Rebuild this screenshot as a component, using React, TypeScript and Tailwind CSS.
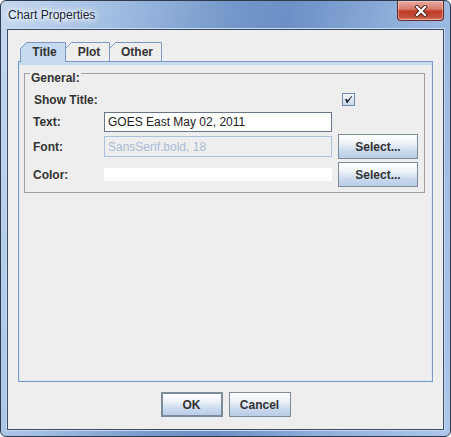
import React from "react";

const font = { fontFamily: '"Liberation Sans", Arial, sans-serif' };

function Tab({ label, width, selected, first }: { label: string; width: number; selected?: boolean; first?: boolean }) {
  const h = selected ? 20 : 19;
  return (
    <div
      className={`relative flex items-center justify-center text-[12px] font-bold text-[#333333] ${first ? "" : "-ml-px"} ${selected ? "z-10" : ""}`}
      style={{ width, height: 19 }}
    >
      <svg className="absolute left-0 top-0" width={width} height={h}>
        <path
          d={`M0.5 ${h} V6.5 L6.5 0.5 H${width - 0.5} V${h}`}
          fill={selected ? "#c6daf0" : "#eeeeee"}
          stroke="#7b98c2"
        />
        {selected && <rect x="1" y="19" width={width - 2} height="1" fill="#c6daf0" />}
      </svg>
      <span className="relative pt-[1px] pl-[3px]">{label}</span>
    </div>
  );
}

function JButton({ label, width, isDefault }: { label: string; width: number; isDefault?: boolean }) {
  return (
    <button
      className={`flex h-[25px] items-center justify-center bg-[linear-gradient(180deg,#ffffff_0%,#eef3f9_35%,#c9d9ed_70%,#b9cde6_100%)] text-[12px] font-bold text-[#333333] ${
        isDefault ? "border-2 border-[#7d8b99]" : "border border-[#7d8b99]"
      }`}
      style={{ width }}
    >
      {label}
    </button>
  );
}

export default function App() {
  return (
    <div
      className="flex h-[437px] w-[451px] flex-col rounded-[6px] border border-[#2f3b4b] bg-[linear-gradient(100deg,#c4d8ef_0%,#a5c0e4_20%,#7397c9_45%,#6c90c5_55%,#8eaedb_75%,#adc6ea_100%)] px-[6px] pb-[6px]"
      style={font}
    >
      {/* Barra de título */}
      <div className="flex h-[28px] items-start justify-between">
        <span
          className="mt-[8px] ml-[1px] text-[12px] leading-none text-[#1b2636]"
          style={{ textShadow: "0 0 4px #ffffff, 0 0 6px #ffffff, 0 0 8px #ffffff" }}
        >
          Chart Properties
        </span>
        <div className="flex h-[20px] w-[47px] items-center justify-center rounded-b-[4px] border border-t-0 border-[#6b2a22] bg-[linear-gradient(180deg,#e9aaa0_0%,#d9806f_40%,#c23a26_55%,#c4503a_85%,#dc8a78_100%)] shadow-[inset_0_0_0_1px_rgba(255,255,255,0.35)]">
          <svg width="14" height="12" viewBox="0 0 14 12">
            <path d="M3 2 L11 10 M11 2 L3 10" stroke="#4a1f1a" strokeWidth="4" strokeLinecap="square" />
            <path d="M3 2 L11 10 M11 2 L3 10" stroke="#ffffff" strokeWidth="2.2" strokeLinecap="square" />
          </svg>
        </div>
      </div>

      {/* Contenido */}
      <div className="flex h-[401px] w-[437px] flex-col border border-[#3b4b61] bg-[#eeeeee] px-[10px] pt-[12px] shadow-[0_0_0_1px_#c8daf1]">
        {/* Pestañas */}
        <div className="ml-[2px] flex">
          <Tab label="Title" width={46} selected first />
          <Tab label="Plot" width={45} />
          <Tab label="Other" width={53} />
        </div>

        {/* Panel */}
        <div className="h-[321px] w-[415px] border border-[#7b98c2] pt-[11px] shadow-[inset_0_3px_0_#c6daf0,inset_0_0_0_1px_#dde8f5]">
          <div className="relative ml-[5px] w-[401px] border border-[#a0a0a0] pt-[16px] pb-[5px] pl-[8px] pr-[6px]">
            <span className="absolute left-[5px] top-[-3px] bg-[#eeeeee] px-[1px] text-[12px] font-bold leading-[14px] text-[#333333]">
              General:
            </span>

            <div className="flex flex-col">
              {/* Show Title */}
              <div className="flex h-[19px] items-center">
                <span className="w-[305px] pl-[1px] text-[12px] font-bold text-[#333333]">Show Title:</span>
                <div className="ml-[4px] flex h-[13px] w-[13px] items-center justify-center border border-[#7189a6] bg-[linear-gradient(180deg,#f4f8fc,#c9daee)]">
                  <svg width="11" height="11" viewBox="0 0 11 11">
                    <path d="M2 5 L4 5 L4.6 6.6 L8.6 2 L9.4 2 L4.6 9 L3.6 9 Z" fill="#222222" />
                  </svg>
                </div>
              </div>

              {/* Text */}
              <div className="mt-[3px] flex h-[20px] items-center">
                <span className="w-[71px] text-[12px] font-bold text-[#333333]">Text:</span>
                <div className="flex h-[20px] w-[228px] items-center border border-[#6a7788] bg-white pl-[3px] text-[12px] text-[#222222]">
                  GOES East May 02, 2011
                </div>
              </div>

              {/* Font */}
              <div className="mt-[2px] flex h-[25px] items-center">
                <span className="w-[71px] text-[12px] font-bold text-[#333333]">Font:</span>
                <div className="flex h-[21px] w-[228px] items-center border border-[#a9c0de] bg-[#eeeeee] pl-[3px] text-[12px] text-[#a8bcd7]">
                  SansSerif.bold, 18
                </div>
                <div className="ml-[6px]">
                  <JButton label="Select..." width={80} />
                </div>
              </div>

              {/* Color */}
              <div className="mt-[3px] flex h-[25px] items-center">
                <span className="w-[71px] text-[12px] font-bold text-[#333333]">Color:</span>
                <div className="h-[13px] w-[228px] bg-white" />
                <div className="ml-[6px]">
                  <JButton label="Select..." width={80} />
                </div>
              </div>
            </div>
          </div>
        </div>

        {/* Botones */}
        <div className="mt-[10px] flex justify-center gap-[6px]">
          <JButton label="OK" width={62} isDefault />
          <JButton label="Cancel" width={62} />
        </div>
      </div>
    </div>
  );
}
